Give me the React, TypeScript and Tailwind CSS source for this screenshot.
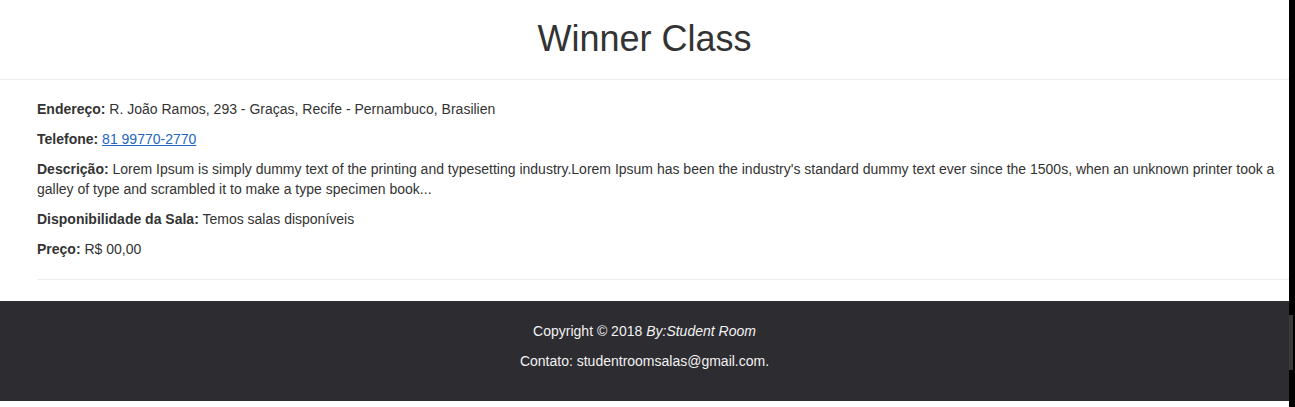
export default function App() {
    return (
        <div className="flex w-[1295px] h-[407px] overflow-hidden bg-white text-[14px] leading-[20px] text-[#333]" style={{ fontFamily: '"Liberation Sans", Arial, sans-serif' }}>
            <div className="flex flex-col w-[1289px]">
                <h1 className="mt-[19px] mb-[10px] text-center text-[36px] leading-[39.6px] font-normal">Winner Class</h1>
                <hr className="mt-[10px] border-0 border-t border-[#eee]" />
                <div className="pl-[37px] pt-[19px]">
                    <p className="mb-[10px]"><b>Endereço:</b> R. João Ramos, 293 - Graças, Recife - Pernambuco, Brasilien</p>
                    <p className="mb-[10px]"><b>Telefone:</b> <a href="#" className="text-[#2266c0] underline">81 99770-2770</a></p>
                    <p className="mb-[10px] pr-[10px]"><b>Descrição:</b> Lorem Ipsum is simply dummy text of the printing and typesetting industry.Lorem Ipsum has been the industry's standard dummy text ever since the 1500s, when an unknown printer took a galley of type and scrambled it to make a type specimen book...</p>
                    <p className="mb-[10px]"><b>Disponibilidade da Sala:</b> Temos salas disponíveis</p>
                    <p className="mb-[10px]"><b>Preço:</b> R$ 00,00</p>
                    <hr className="mt-[20px] mb-[21px] border-0 border-t border-[#eee]" />
                </div>
                <footer className="bg-[#2d2c31] text-[#f2f2f2] text-center py-[20px]">
                    <p className="mb-[10px]">Copyright © 2018 <i>By:Student Room</i></p>
                    <p className="mb-[10px]">Contato: studentroomsalas@gmail.com.</p>
                </footer>
            </div>
            <div className="flex flex-col w-[6px] bg-black">
                <div className="h-[315px]" />
                <div className="h-[55px] w-[4px] bg-[#3b3a37]" />
            </div>
        </div>
    )
}
